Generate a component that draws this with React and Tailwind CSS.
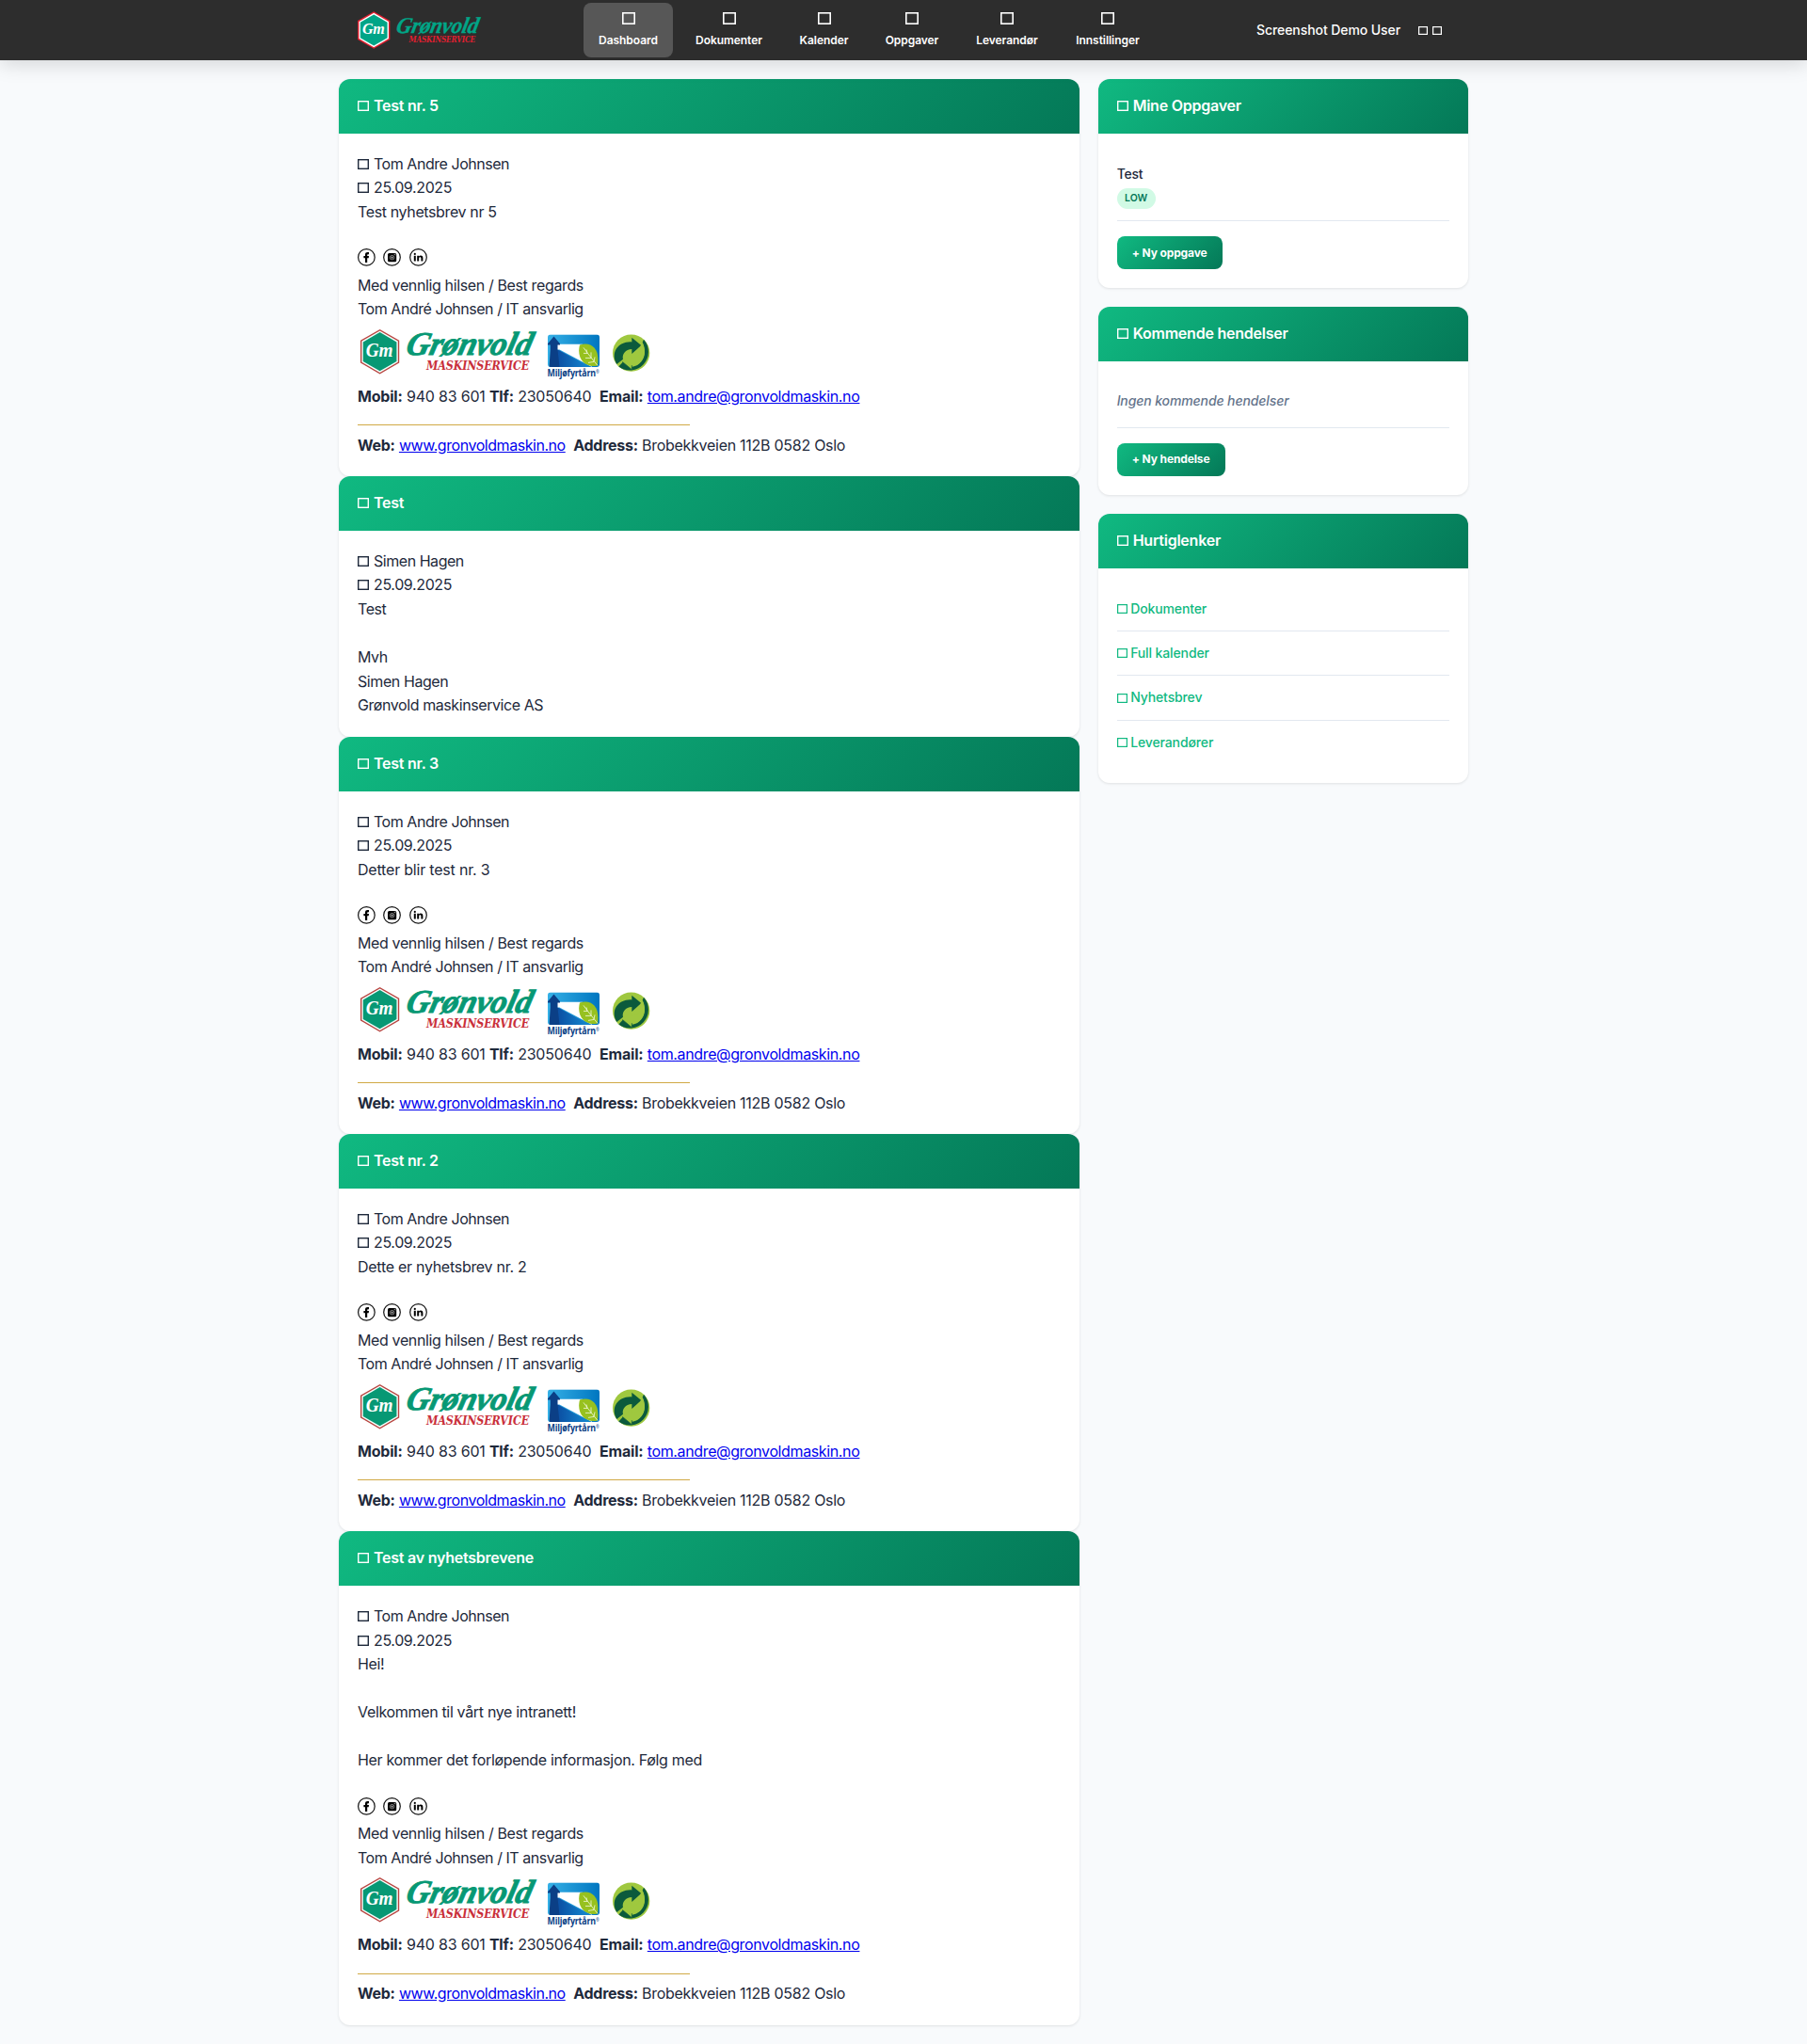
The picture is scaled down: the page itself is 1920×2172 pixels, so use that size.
import React from "react";

const Box = ({ w = 12, h = 11, s = 1.4, className = "" }) => (
  <svg width={w} height={h} viewBox={`0 0 ${w} ${h}`} className={"inline-block shrink-0 align-baseline " + className}>
    <rect x={s / 2} y={s / 2} width={w - s} height={h - s} fill="none" stroke="currentColor" strokeWidth={s} />
  </svg>
);

function Hexagon({ cx, cy, r, white, red, green, size }) {
  const pts = (k) =>
    [[0, -k], [0.866 * k, -k / 2], [0.866 * k, k / 2], [0, k], [-0.866 * k, k / 2], [-0.866 * k, -k / 2]]
      .map(([x, y]) => `${cx + x},${cy + y}`)
      .join(" ");
  return (
    <g>
      <polygon points={pts(r)} fill={red} />
      <polygon points={pts(r - 1.6)} fill={white} />
      <polygon points={pts(r - 3.2)} fill={green} />
      <text x={cx - r * 0.62} y={cy + size * 0.28} fontFamily="'Liberation Serif', serif" fontStyle="italic" fontWeight="700" fontSize={size} fill="#fff" textLength={r * 1.2} lengthAdjust="spacingAndGlyphs">Gm</text>
    </g>
  );
}

const HeaderLogo = () => (
  <svg width="136" height="44" viewBox="380 10 136 44" className="shrink-0">
    <Hexagon cx={397.2} cy={32} r={19.8} white="#fff" red="#e11f30" green="#00a587" size={16} />
    <g transform="translate(420 34.6) skewX(-12)">
      <text fontFamily="'Liberation Serif', serif" fontStyle="italic" fontWeight="700" fontSize="24" fill="#00a587" stroke="#00a587" strokeWidth="0.4" textLength="87" lengthAdjust="spacingAndGlyphs">Grønvold</text>
    </g>
    <text x="434.5" y="44.8" fontFamily="'DejaVu Serif', serif" fontStyle="italic" fontWeight="700" fontSize="8.6" fill="#e11f30" textLength="70.5" lengthAdjust="spacingAndGlyphs">MASKINSERVICE</text>
  </svg>
);

const SignatureLogos = () => (
  <svg width="312" height="67" viewBox="380 341.6 312 67" className="block">
    <Hexagon cx={403.6} cy={373.3} r={23.8} white="#f3fffb" red="#b8433f" green="#079874" size={20} />
    <g transform="translate(430 376.2) skewX(-14)">
      <text fontFamily="'Liberation Serif', serif" fontStyle="italic" fontWeight="700" fontSize="35" fill="#079874" stroke="#079874" strokeWidth="0.9" textLength="133" lengthAdjust="spacingAndGlyphs">Grønvold</text>
    </g>
    <text x="453" y="392.6" fontFamily="'DejaVu Serif', serif" fontStyle="italic" fontWeight="700" fontSize="12.5" fill="#c92f3a" textLength="109" lengthAdjust="spacingAndGlyphs">MASKINSERVICE</text>
    <defs>
      <linearGradient id="sky" x1="0" y1="0" x2="1" y2="0">
        <stop offset="0" stopColor="#35b0e6" />
        <stop offset="1" stopColor="#0076c0" />
      </linearGradient>
      <linearGradient id="sea" x1="0" y1="0" x2="1" y2="0">
        <stop offset="0" stopColor="#0b4ea2" />
        <stop offset="1" stopColor="#1489d1" />
      </linearGradient>
      <clipPath id="badge"><rect x="582" y="355" width="55" height="34.5" rx="3" /></clipPath>
    </defs>
    <g clipPath="url(#badge)">
      <rect x="582" y="355" width="55" height="35" fill="url(#sky)" />
      <path d="M592 370.5 L626 389.5 H592Z" fill="url(#sea)" />
      <path d="M586 365.3 L619 365.3 L629 389.5 L594.5 371 H586Z" fill="#fff" />
      <path d="M582 364.8 L588.5 357 L595 364.8 V366 H592.5 V371.3 L594.5 389.5 H583.5 L584.8 371 V366 H582Z" fill="#0b3f86" />
      <path d="M616 366 C628 362 638 370 635 388 C623 391 612 382 616 366Z" fill="#97c11f" />
      <path d="M620 369 C625 376 630 382 635 388 M624 375 l-1 -4 M624 375 l-4 0 M628 380 l0 -6 M628 380 l-6 0 M631 384 l1 -5 M631 384 l-6 1" stroke="#f3fadf" strokeWidth="0.8" fill="none" />
    </g>
    <text x="581.5" y="399.8" fontFamily="'Open Sans', sans-serif" fontWeight="700" fontSize="9.8" fill="#0b3f86" textLength="51.5" lengthAdjust="spacingAndGlyphs">Miljøfyrtårn</text>
    <text x="633" y="397" fontFamily="'Open Sans', sans-serif" fontSize="4.5" fill="#0b3f86">®</text>
    <g transform="translate(648 352) scale(0.3333)">
      <circle cx="68" cy="68" r="59" fill="#9fc83f" />
      <path d="M108 25 A59 59 0 0 1 28 111 L42 96 L72 112 C104 106 122 72 104 34Z" fill="#0b5a3c" />
      <path d="M22 104 C0 66 28 30 70 33 V19 L100 44 L70 71 V56 C50 57 38 72 42 88Z" fill="#0b5a3c" />
      <path d="M104 36 C121 72 102 108 70 107 V121 L40 96 L70 70 V85 C90 84 101 66 96 48Z" fill="#9fc83f" />
      <path d="M40 96 L70 121 V107" fill="none" stroke="#0b5a3c" strokeWidth="2" />
    </g>
  </svg>
);

const Socials = () => (
  <svg width="76" height="20" viewBox="0 0 76 20" className="block">
    <g fill="none" stroke="#111" strokeWidth="1.2">
      <circle cx="9.4" cy="9.4" r="8.8" />
      <circle cx="36.5" cy="9.4" r="8.8" />
      <circle cx="64.5" cy="9.4" r="8.8" />
    </g>
    <path d="M8 15 V10.3 H6.4 V8 H8 V6.6 C8 4.8 9 4 10.6 4 H12 V6.2 H11 C10.4 6.2 10.2 6.5 10.2 7 V8 H12 L11.7 10.3 H10.2 V15Z" fill="#000" />
    <rect x="32" y="5" width="9.2" height="9.2" rx="1.5" fill="#000" />
    <circle cx="36.6" cy="9.7" r="2.3" fill="none" stroke="#ddd" strokeWidth="0.6" />
    <path d="M36.6 8.4 v2.6 M35.3 9.7 h2.6 M38.6 6.3 h1.4 v1.2" fill="none" stroke="#ddd" strokeWidth="0.6" />
    <path d="M59.8 7.7 h2 V13.4 h-2Z M63.2 7.7 h1.9 v0.8 c0.9 -1.4 4.3 -1.5 4.3 1.6 V13.4 h-2 V10.4 c0 -1.6 -2.2 -1.5 -2.2 0 V13.4 h-2Z" fill="#000" />
    <circle cx="60.8" cy="5.9" r="1.1" fill="#000" />
  </svg>
);

const Line = ({ children, className = "tracking-[-0.37px]" }) => (
  <div className={"h-[25.6px] whitespace-pre " + className}>{children}</div>
);

const Link = ({ children, className }) => (
  <a className={"text-[#0000ee] underline " + className}>{children}</a>
);

function Signature() {
  return (
    <>
      <div className="h-[26.6px]"><Socials /></div>
      <Line>Med vennlig hilsen / Best regards</Line>
      <Line className="tracking-[-0.46px]">Tom André Johnsen / IT ansvarlig</Line>
      <SignatureLogos />
      <Line className="tracking-[-0.2px]">
        <b className="font-bold">Mobil:</b> 940 83 601 <b className="font-bold">Tlf:</b> 23050640{"  "}
        <b className="font-bold">Email:</b> <Link className="tracking-[-0.37px]">tom.andre@gronvoldmaskin.no</Link>
      </Line>
      <div className="flex h-[26.25px] items-start pt-[17px]"><div className="h-px w-[353px] bg-[#d1a945]" /></div>
      <Line className="tracking-[-0.27px]">
        <b className="font-bold">Web:</b> <Link className="tracking-[-0.45px]">www.gronvoldmaskin.no</Link>{"  "}
        <b className="font-bold">Address:</b> Brobekkveien 112B 0582 Oslo
      </Line>
    </>
  );
}

const CardHead = ({ children }) => (
  <h3 className="flex h-[57.6px] items-center gap-[5px] bg-[linear-gradient(135deg,#10b981_0%,#047857_100%)] px-5 pb-[1.5px] text-base font-semibold tracking-[-0.24px] text-white">
    <Box className="mt-px" />
    {children}
  </h3>
);

const Card = ({ title, children }) => (
  <section className="overflow-hidden rounded-xl bg-white shadow-[0_1px_3px_rgba(0,0,0,0.1)]">
    <CardHead>{title}</CardHead>
    <div className="p-5">{children}</div>
  </section>
);

function News({ title, author, lines, signed = true, tracking }) {
  return (
    <Card title={title}>
      <Line className="tracking-[-0.46px]"><Box className="mr-[5px]" />{author}</Line>
      <Line><Box className="mr-[5px]" />25.09.2025</Line>
      {lines.map((l, i) => <Line key={i} className={tracking}>{l}</Line>)}
      {signed && <Signature />}
    </Card>
  );
}

const Button = ({ children, className }) => (
  <button className={"block h-[35px] rounded-lg bg-[linear-gradient(135deg,#10b981_0%,#047857_100%)] text-center text-xs font-bold tracking-[-0.12px] text-white " + className}>
    {children}
  </button>
);

const nav = [
  ["Dashboard", "w-[95px] bg-[#575757]"],
  ["Dokumenter", "w-[103px]"],
  ["Kalender", "w-[83px]"],
  ["Oppgaver", "w-[88px]"],
  ["Leverandør", "w-[98px]"],
  ["Innstillinger", "w-[100px]"],
];

export default function App() {
  return (
    <div className="min-h-[2172px] bg-[#f8fafc] font-['Inter',sans-serif] text-base leading-[25.6px] tracking-[-0.2px] text-[#1e293b]">
      <header className="relative h-16 bg-[#2d2d2d] shadow-[0_4px_20px_rgba(0,0,0,0.15)]">
        <div className="mx-auto flex h-16 w-[1200px] items-center px-5 text-white">
          <HeaderLogo />
          <nav className="ml-[104px] flex gap-2">
            {nav.map(([label, cls]) => (
              <a key={label} className={"flex h-[58px] flex-col items-center rounded-lg pt-[10px] text-xs font-semibold tracking-[-0.05px] " + cls}>
                <Box w={14} h={13} s={1.6} className="mb-[7px]" />
                <span className="leading-5">{label}</span>
              </a>
            ))}
          </nav>
          <div className="ml-auto flex items-center pr-[8px] text-sm font-medium tracking-[-0.08px]">
            <span className="mr-[19px]">Screenshot Demo User</span>
            <Box w={10} h={9} s={1.2} className="mr-[5px]" />
            <Box w={10} h={9} s={1.2} />
          </div>
        </div>
      </header>
      <main className="mx-auto mt-5 grid w-[1200px] grid-cols-[2fr_1fr] items-start gap-5">
        <div>
          <News title="Test nr. 5" author="Tom Andre Johnsen" lines={["Test nyhetsbrev nr 5", ""]} />
          <News title="Test" author="Simen Hagen" lines={["Test", "", "Mvh", "Simen Hagen", "Grønvold maskinservice AS"]} signed={false} tracking="tracking-[-0.42px]" />
          <News title="Test nr. 3" author="Tom Andre Johnsen" lines={["Detter blir test nr. 3", ""]} tracking="tracking-[-0.2px]" />
          <News title="Test nr. 2" author="Tom Andre Johnsen" lines={["Dette er nyhetsbrev nr. 2", ""]} tracking="tracking-[-0.28px]" />
          <News title="Test av nyhetsbrevene" author="Tom Andre Johnsen" lines={["Hei!", "", "Velkommen til vårt nye intranett!", "", "Her kommer det forløpende informasjon. Følg med", ""]} tracking="tracking-[-0.33px]" />
        </div>
        <aside className="flex flex-col gap-5">
          <Card title="Mine Oppgaver">
            <div className="mb-4 border-b border-[#e2e8f0] py-3 text-sm font-medium leading-[22.4px]">
              <div>Test</div>
              <div className="mt-1 flex h-[22px] w-[41px] items-center justify-center rounded-full bg-[#d1fae5] text-[10.5px] font-semibold tracking-normal text-[#047857]">LOW</div>
            </div>
            <Button className="w-[112px]">+ Ny oppgave</Button>
          </Card>
          <Card title="Kommende hendelser">
            <div className="mb-4 h-[51.4px] border-b border-[#e2e8f0] pt-[11.2px] text-sm font-medium italic leading-[22.4px] tracking-[-0.11px] text-[#64748b]">Ingen kommende hendelser</div>
            <Button className="w-[115px]">+ Ny hendelse</Button>
          </Card>
          <Card title="Hurtiglenker">
            {["Dokumenter", "Full kalender", "Nyhetsbrev", "Leverandører"].map((t) => (
              <a key={t} className="flex items-center gap-[3.5px] border-b border-[#e2e8f0] py-3 text-sm font-medium leading-[22.4px] tracking-[-0.12px] text-[#10b981] last:border-b-0">
                <Box w={11} h={10} s={1.2} />
                {t}
              </a>
            ))}
          </Card>
        </aside>
      </main>
    </div>
  );
}
